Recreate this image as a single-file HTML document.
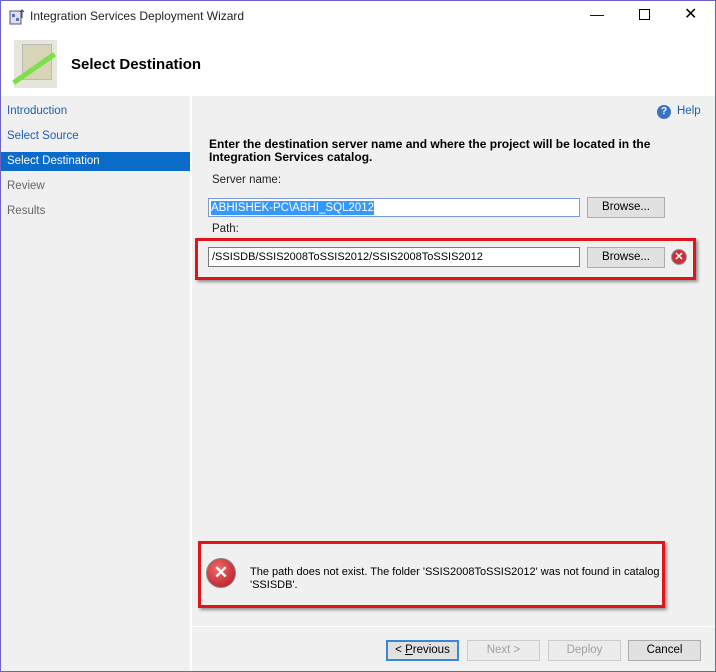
<!DOCTYPE html>
<html><head><style>
*{margin:0;padding:0;box-sizing:border-box}
body{width:716px;height:672px;position:relative;overflow:hidden;background:#f0f0f0;font-family:"Liberation Sans",sans-serif;font-size:12px;color:#000}
.a{position:absolute}
.win{position:absolute;left:0;top:0;width:716px;height:672px;border:1px solid #6b62c9}
.tb{background:#fff;border:1px solid #7a7a7a}
.btn{position:absolute;background:#e1e1e1;border:1px solid #adadad;text-align:center;line-height:18px;font-size:11.5px}
.nav{position:absolute;left:7px;font-size:11.5px}
</style></head><body>
<div class="a" style="left:0;top:0;width:716px;height:96px;background:#fff"></div>
<svg class="a" style="left:9px;top:8px" width="18" height="18"><rect x="1" y="3" width="11" height="13" fill="#dde" stroke="#557"/><rect x="3" y="6" width="3" height="3" fill="#57a"/><rect x="7" y="10" width="3" height="3" fill="#57a"/><path d="M13 10V2M11 4l2-2 2 2" stroke="#346" fill="none"/></svg>
<div class="a" style="left:30px;top:9px;font-size:12px;color:#222">Integration Services Deployment Wizard</div>
<div class="a" style="left:590px;top:6px;font-size:14px">&#8212;</div>
<div class="a" style="left:639px;top:9px;width:11px;height:11px;border:1px solid #000"></div>
<div class="a" style="left:684px;top:4px;font-size:16px">&#10005;</div>
<div class="a" style="left:14px;top:40px;width:43px;height:48px;background:#e6e6dc"></div>
<div class="a" style="left:22px;top:44px;width:30px;height:36px;background:#d8d4b8;border:1px solid #bbb"></div>
<div class="a" style="left:9px;top:66px;width:50px;height:5px;background:#7de04a;transform:rotate(-35deg)"></div>
<div class="a" style="left:71px;top:56px;font-size:15px;font-weight:bold">Select Destination</div>
<div class="a" style="left:190px;top:96px;width:2px;height:576px;background:#fff"></div>
<div class="nav" style="top:105px;color:#1a5fb4">Introduction</div>
<div class="nav" style="top:130px;color:#1a5fb4">Select Source</div>
<div class="a" style="left:1px;top:152px;width:189px;height:19px;background:#0a6bc8"></div>
<div class="nav" style="top:155px;color:#fff">Select Destination</div>
<div class="nav" style="top:180px;color:#666">Review</div>
<div class="nav" style="top:205px;color:#666">Results</div>
<div class="a" style="left:657px;top:105px;width:14px;height:14px;border-radius:50%;background:#3b73c4;color:#fff;font-size:10px;font-weight:bold;text-align:center;line-height:14px">?</div>
<div class="a" style="left:677px;top:105px;color:#1a5fb4;font-size:11.5px">Help</div>
<div class="a" style="left:209px;top:138px;font-weight:bold;line-height:13px;font-size:12px">Enter the destination server name and where the project will be located in the<br>Integration Services catalog.</div>
<div class="a" style="left:212px;top:174px;color:#222;font-size:11.5px">Server name:</div>
<div class="a tb" style="left:208px;top:198px;width:372px;height:19px;border-color:#7a9cd3;font-size:11.5px"><span style="background:#3399ff;color:#fff;margin:2px;display:inline-block;line-height:14px">ABHISHEK-PC\ABHI_SQL2012</span></div>
<div class="btn" style="left:587px;top:197px;width:78px;height:21px">Browse...</div>
<div class="a" style="left:212px;top:223px;color:#222;font-size:11.5px">Path:</div>
<div class="a tb" style="left:208px;top:247px;width:372px;height:20px;padding:2px 3px;line-height:14px;font-size:11px">/SSISDB/SSIS2008ToSSIS2012/SSIS2008ToSSIS2012</div>
<div class="btn" style="left:587px;top:247px;width:78px;height:21px">Browse...</div>
<div class="a" style="left:671px;top:249px;width:16px;height:16px;border-radius:50%;background:#c8303a;border:1px solid #999;color:#fff;font-size:11px;text-align:center;line-height:14px;font-weight:bold">&#10005;</div>
<div class="a" style="left:195px;top:238px;width:501px;height:42px;border:3px solid #e0151c;box-shadow:2px 2px 3px rgba(0,0,0,.4)"></div>
<div class="a" style="left:206px;top:558px;width:30px;height:30px;border-radius:50%;background:radial-gradient(circle at 40% 35%,#f06a6a,#b01420);border:1px solid #888;color:#fff;font-size:17px;text-align:center;line-height:28px;font-weight:bold">&#10005;</div>
<div class="a" style="left:250px;top:566px;line-height:13px;font-size:11px">The path does not exist. The folder 'SSIS2008ToSSIS2012' was not found in catalog<br>'SSISDB'.</div>
<div class="a" style="left:198px;top:541px;width:467px;height:67px;border:3px solid #e0151c;box-shadow:2px 2px 3px rgba(0,0,0,.4)"></div>
<div class="a" style="left:192px;top:626px;width:524px;height:1px;background:#fff"></div>
<div class="btn" style="left:386px;top:640px;width:73px;height:21px;border:2px solid #3c86d8;line-height:17px">&lt; <u>P</u>revious</div>
<div class="btn" style="left:467px;top:640px;width:73px;height:21px;color:#a0a0a0;background:#ececec;border-color:#ccc">Next &gt;</div>
<div class="btn" style="left:548px;top:640px;width:73px;height:21px;color:#a0a0a0;background:#ececec;border-color:#ccc">Deploy</div>
<div class="btn" style="left:628px;top:640px;width:73px;height:21px">Cancel</div>
<div class="win"></div>
</body></html>
